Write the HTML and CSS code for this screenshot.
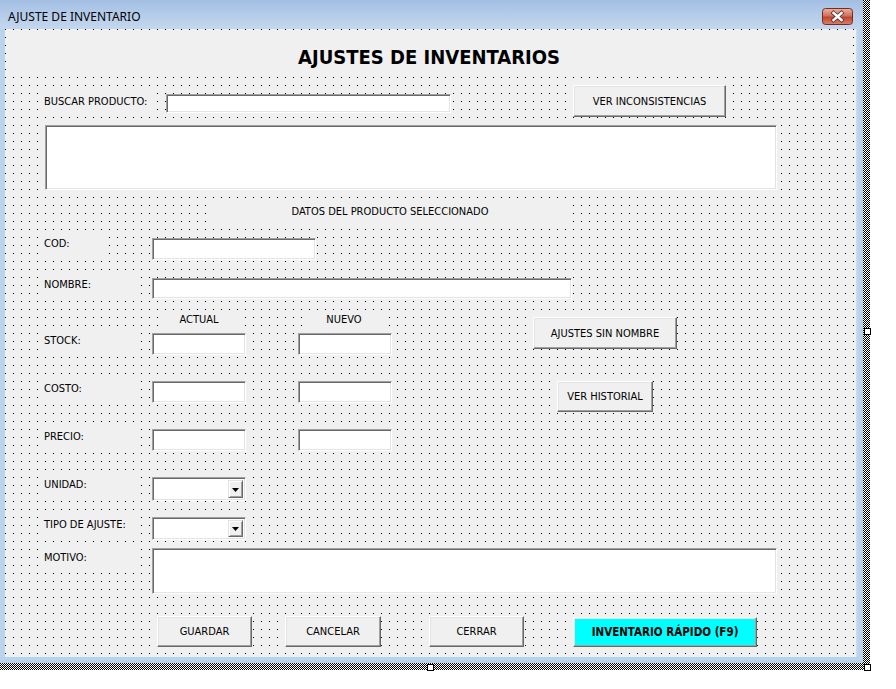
FILE: index.html
```html
<!DOCTYPE html>
<html lang="es">
<head>
<meta charset="utf-8">
<title>AJUSTE DE INVENTARIO</title>
<link rel="stylesheet" href="styles.css">
</head>
<body>
<div class="stage">
  <div class="window">
    <div class="titlebar">
      <span class="title">AJUSTE DE INVENTARIO</span>
      <span class="close">
        <svg width="31" height="17" viewBox="0 0 31 17">
          <defs>
            <linearGradient id="cg" x1="0" y1="0" x2="0" y2="1">
              <stop offset="0" stop-color="#e9b4a6"/>
              <stop offset="0.45" stop-color="#d3705c"/>
              <stop offset="0.55" stop-color="#c0452e"/>
              <stop offset="1" stop-color="#d9826c"/>
            </linearGradient>
          </defs>
          <rect x="0.5" y="0.5" width="30" height="16" rx="3" fill="url(#cg)" stroke="#7b2a1c"/>
          <path d="M11.5 5 L19.5 12 M19.5 5 L11.5 12" stroke="#5a3a36" stroke-width="4.2" stroke-linecap="square"/>
          <path d="M11.5 5 L19.5 12 M19.5 5 L11.5 12" stroke="#ffffff" stroke-width="2.4" stroke-linecap="square"/>
        </svg>
      </span>
    </div>
    <div class="body-row">
      <div class="frame-l"></div>
      <div class="client">
        <div class="lbl heading">AJUSTES DE INVENTARIOS</div>

        <div class="lbl l-buscar">BUSCAR PRODUCTO:</div>
        <div class="tb t-buscar"></div>
        <div class="btn b-incons">VER INCONSISTENCIAS</div>
        <div class="tb t-list"></div>

        <div class="lbl center l-datos">DATOS DEL PRODUCTO SELECCIONADO</div>

        <div class="lbl l-cod">COD:</div>
        <div class="tb t-cod"></div>

        <div class="lbl l-nombre">NOMBRE:</div>
        <div class="tb t-nombre"></div>

        <div class="lbl center l-actual">ACTUAL</div>
        <div class="lbl center l-nuevo">NUEVO</div>

        <div class="lbl l-stock">STOCK:</div>
        <div class="tb small c1 r-stock"></div>
        <div class="tb small c2 r-stock"></div>
        <div class="btn b-sinnombre">AJUSTES SIN NOMBRE</div>

        <div class="lbl l-costo">COSTO:</div>
        <div class="tb small c1 r-costo"></div>
        <div class="tb small c2 r-costo"></div>
        <div class="btn b-historial">VER HISTORIAL</div>

        <div class="lbl l-precio">PRECIO:</div>
        <div class="tb small c1 r-precio"></div>
        <div class="tb small c2 r-precio"></div>

        <div class="lbl l-unidad">UNIDAD:</div>
        <div class="tb combo cb-unidad"><span class="drop"><svg width="7" height="4" viewBox="0 0 7 4"><path d="M0 0H7L3.5 4Z" fill="#000"/></svg></span></div>

        <div class="lbl l-tipo">TIPO DE AJUSTE:</div>
        <div class="tb combo cb-tipo"><span class="drop"><svg width="7" height="4" viewBox="0 0 7 4"><path d="M0 0H7L3.5 4Z" fill="#000"/></svg></span></div>

        <div class="lbl l-motivo">MOTIVO:</div>
        <div class="tb t-motivo"></div>

        <div class="btn b-guardar">GUARDAR</div>
        <div class="btn b-cancelar">CANCELAR</div>
        <div class="btn b-cerrar">CERRAR</div>
        <div class="btn cyan b-rapido">INVENTARIO RÁPIDO (F9)</div>
      </div>
      <div class="frame-r"></div>
    </div>
    <div class="frame-b"></div>
  </div>
  <span class="handle h-right"></span>
  <span class="handle h-bottom"></span>
  <span class="handle h-corner"></span>
</div>
</body>
</html>
```
FILE: styles.css
```css
html, body {
  margin: 0;
  padding: 0;
  background: #ffffff;
}

body {
  width: 896px;
  height: 689px;
  overflow: hidden;
  font-family: "DejaVu Sans Condensed", "DejaVu Sans", "Liberation Sans", sans-serif;
  font-size: 11px;
  color: #000;
}

.stage {
  position: relative;
  display: inline-block;
  vertical-align: top;
  padding: 0 7px 7px 0;
  background: repeating-conic-gradient(#000 0 25%, #fff 0 50%) 0 0 / 2px 2px;
}

.window {
  width: 863px;
  height: 663px;
  display: flex;
  flex-direction: column;
  background: #b9d1ea;
}

.titlebar {
  height: 29px;
  flex: none;
  display: flex;
  justify-content: space-between;
  align-items: flex-start;
  padding: 0 10px 0 8px;
  box-sizing: border-box;
  background: linear-gradient(180deg, #a2bee2 0%, #b3cbe9 45%, #c3d7ee 100%);
}

.title {
  font-family: "Noto Sans", "Open Sans", sans-serif;
  font-size: 12px;
  line-height: 16px;
  margin-top: 9px;
  color: #000;
}

.close {
  margin-top: 8px;
  width: 31px;
  height: 17px;
  display: block;
}

.close svg {
  display: block;
}

.body-row {
  flex: 1;
  display: flex;
}

.frame-l {
  width: 5px;
  flex: none;
  background: #bcd3ec;
}

.frame-r {
  width: 7px;
  flex: none;
  background: linear-gradient(90deg, #cfe0f2 0, #bcd3ec 2px, #b5cde8 100%);
}

.frame-b {
  height: 6px;
  flex: none;
  background: linear-gradient(180deg, #a9d6f2 0, #bcd3ec 2px, #b5cde8 100%);
}

.client {
  position: relative;
  width: 851px;
  height: 628px;
  background-color: #f0f0f0;
  background-image: conic-gradient(at 1px 1px, transparent 75%, #000 0);
  background-size: 8px 8px;
  background-position: 0 0;
}

/* ---------- labels ---------- */
.lbl {
  position: absolute;
  background: #f0f0f0;
  white-space: nowrap;
  box-sizing: border-box;
  padding-left: 4px;
  height: 22px;
  line-height: 22px;
  width: 97px;
  left: 35px;
}

.lbl.center {
  text-align: center;
  padding-left: 0;
}

.heading {
  left: 1px;
  top: 4px;
  width: 846px;
  height: 42px;
  line-height: 48px;
  padding: 0;
  text-align: center;
  font-weight: bold;
  font-size: 20px;
}

.l-buscar { top: 61px; width: 117px; height: 23px; line-height: 23px; }
.l-datos  { left: 202px; top: 170px; width: 366px; height: 26px; line-height: 26px; }
.l-cod    { top: 204px; width: 62px; }
.l-nombre { top: 245px; }
.l-actual { left: 155px; top: 282px; width: 78px; height: 17px; line-height: 17px; }
.l-nuevo  { left: 300px; top: 282px; width: 78px; height: 17px; line-height: 17px; }
.l-stock  { top: 301px; }
.l-costo  { top: 349px; }
.l-precio { top: 397px; }
.l-unidad { top: 445px; }
.l-tipo   { top: 485px; }
.l-motivo { top: 518px; }

/* ---------- sunken text boxes ---------- */
.tb {
  position: absolute;
  box-sizing: border-box;
  background: #fff;
  border-top: 1px solid #a0a0a0;
  border-left: 1px solid #a0a0a0;
  border-bottom: 1px solid #ffffff;
  border-right: 1px solid #ffffff;
  box-shadow: inset 1px 1px 0 #696969, inset -1px -1px 0 #e3e3e3;
}

.t-buscar { left: 161px; top: 65px; width: 285px; height: 19px; }
.t-list   { left: 40px; top: 96px; width: 732px; height: 65px; }
.t-cod    { left: 147px; top: 209px; width: 164px; height: 22px; }
.t-nombre { left: 147px; top: 249px; width: 420px; height: 21px; }
.t-motivo { left: 147px; top: 519px; width: 625px; height: 46px; }

.small { width: 94px; height: 22px; }
.c1 { left: 147px; }
.c2 { left: 293px; }
.r-stock  { top: 304px; }
.r-costo  { top: 352px; }
.r-precio { top: 400px; }

.combo {
  left: 147px;
  width: 94px;
  height: 24px;
  display: flex;
  justify-content: flex-end;
  padding: 2px 2px 2px 0;
}

.cb-unidad { top: 448px; }
.cb-tipo   { top: 488px; height: 23px; }

.drop {
  width: 15px;
  box-sizing: border-box;
  background: #f0f0f0;
  border-top: 1px solid #e3e3e3;
  border-left: 1px solid #e3e3e3;
  border-bottom: 1px solid #696969;
  border-right: 1px solid #696969;
  box-shadow: inset 1px 1px 0 #ffffff, inset -1px -1px 0 #a0a0a0;
  display: flex;
  align-items: center;
  justify-content: center;
  padding-top: 1px;
}

.drop svg {
  display: block;
}

/* ---------- raised buttons ---------- */
.btn {
  position: absolute;
  box-sizing: border-box;
  background: #f0f0f0;
  border-top: 1px solid #ffffff;
  border-left: 1px solid #ffffff;
  border-bottom: 1px solid #696969;
  border-right: 1px solid #696969;
  box-shadow: inset -1px -1px 0 #a0a0a0, inset 1px 1px 0 #e3e3e3;
  display: flex;
  align-items: center;
  justify-content: center;
  white-space: nowrap;
}

.btn.cyan {
  background: #00ffff;
  font-weight: bold;
  font-size: 11.5px;
}

.b-incons     { left: 568px; top: 56px;  width: 153px; height: 32px; }
.b-sinnombre  { left: 528px; top: 288px; width: 144px; height: 32px; }
.b-historial  { left: 552px; top: 352px; width: 96px;  height: 31px; }
.b-guardar    { left: 152px; top: 587px; width: 95px;  height: 31px; }
.b-cancelar   { left: 280px; top: 587px; width: 96px;  height: 31px; }
.b-cerrar     { left: 424px; top: 587px; width: 95px;  height: 31px; }
.b-rapido     { left: 568px; top: 588px; width: 184px; height: 30px; }

/* ---------- selection handles ---------- */
.handle {
  position: absolute;
  width: 7px;
  height: 7px;
  box-sizing: border-box;
  border: 1px solid #000;
  background: #fff;
}

.h-right  { left: 864px; top: 328px; }
.h-bottom { left: 427px; top: 664px; }
.h-corner { left: 864px; top: 664px; }
```
